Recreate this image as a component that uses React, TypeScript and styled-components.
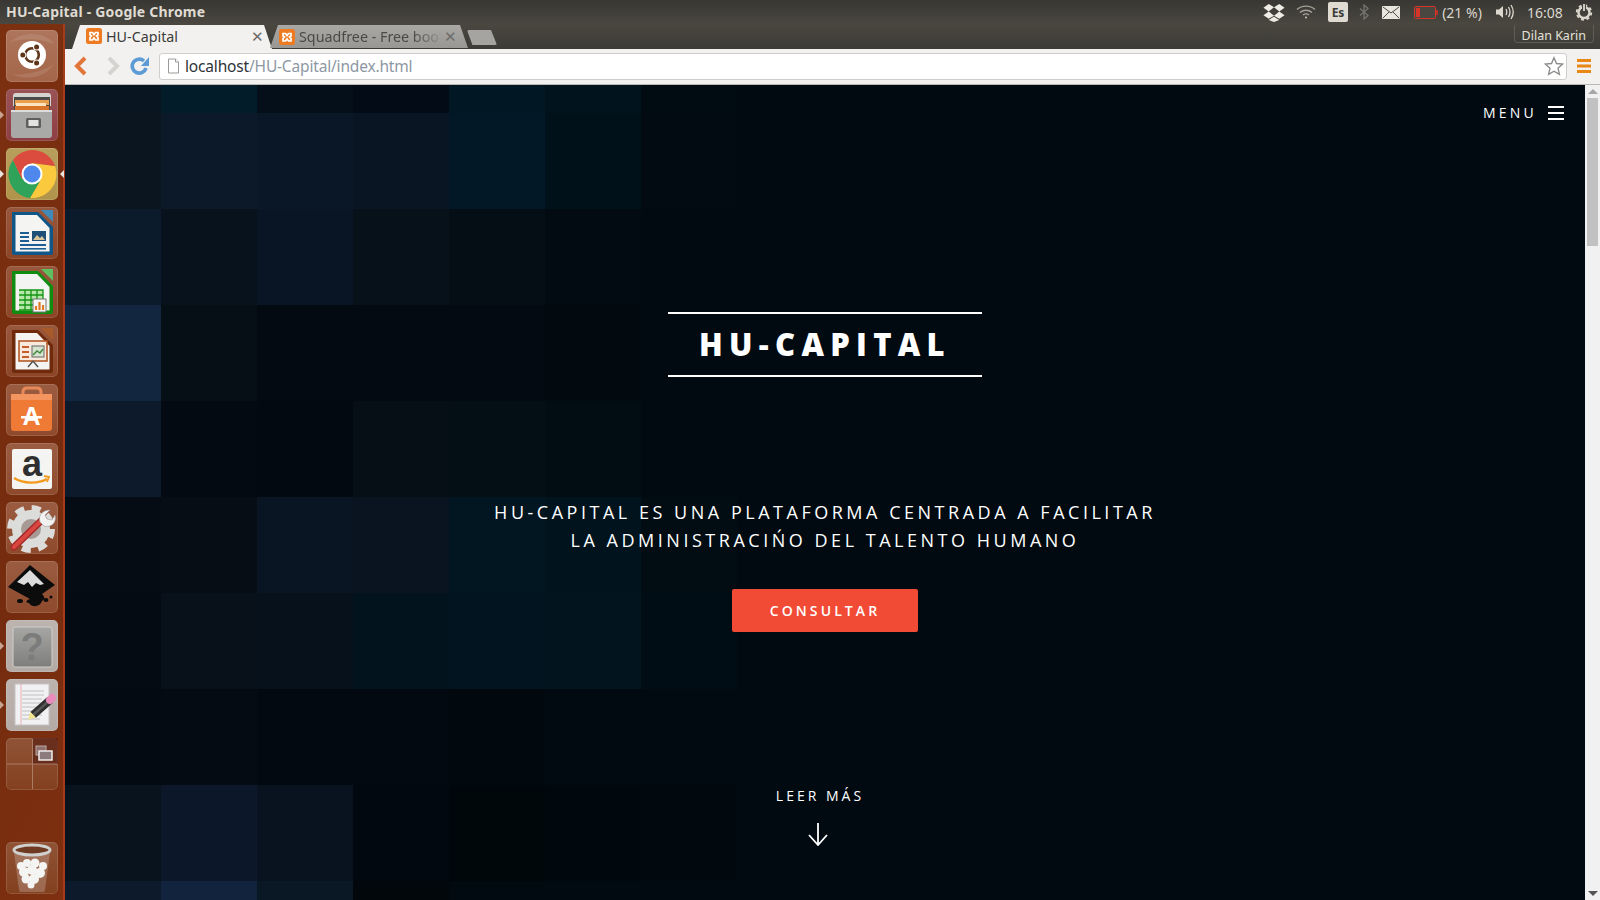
import React from 'react';
import styled, { createGlobalStyle } from 'styled-components';

const Global = createGlobalStyle`
  html, body {
    margin: 0;
    height: 100%;
    overflow: hidden;
    background: #3c3b37;
  }
  * { box-sizing: border-box; }
`;

const uiFont = `"Noto Sans", "Open Sans", sans-serif`;
const siteFont = `"Open Sans", "Noto Sans", sans-serif`;

const Desktop = styled.div`
  width: 1600px;
  height: 900px;
  display: flex;
  flex-direction: column;
  overflow: hidden;
`;

const TopPanel = styled.header`
  height: 24px;
  flex: none;
  display: flex;
  align-items: center;
  padding-left: 6px;
  background: linear-gradient(#383733, #4a4740);
  font-family: ${uiFont};
  color: #dfdbd2;
`;

const WindowTitle = styled.div`
  font-size: 14px;
  font-weight: 700;
  flex: 1;
  letter-spacing: 0.2px;
  padding-bottom: 2px;
`;

const Indicators = styled.div`
  display: flex;
  align-items: center;
  height: 24px;
  padding-right: 7px;
`;

const Indicator = styled.div<{ $w: number; $ml?: number }>`
  width: ${(p) => p.$w}px;
  margin-left: ${(p) => p.$ml ?? 0}px;
  height: 24px;
  display: flex;
  align-items: center;
  justify-content: center;
  font-size: 14px;
  white-space: nowrap;
  color: #dcd8ce;
`;

const LangBox = styled.div`
  width: 20px;
  height: 20px;
  border-radius: 2px;
  background: #dfdbd2;
  color: #3c3b37;
  font-size: 12px;
  font-weight: 700;
  display: flex;
  align-items: center;
  justify-content: center;
`;

const Body = styled.div`
  flex: 1;
  display: flex;
  min-height: 0;
`;

const Launcher = styled.nav`
  width: 65px;
  flex: none;
  display: flex;
  flex-direction: column;
  gap: 7px;
  padding: 6px 0 6px 6px;
  background: linear-gradient(115deg, #7c3010, #752c0e 60%, #7e3010);
  border-right: 2px solid #a83a1c;
`;

const Tile = styled.div<{ $tint: string }>`
  position: relative;
  width: 52px;
  height: 52px;
  flex: none;
  border-radius: 5px;
  background: linear-gradient(rgba(255, 255, 255, 0.1), rgba(255, 255, 255, 0)), ${(p) => p.$tint};
  box-shadow: inset 0 0 0 1px rgba(255, 255, 255, 0.12);

  svg {
    display: block;
  }
`;

const TrashTile = styled(Tile)`
  margin-top: auto;
`;

const Pip = styled.span<{ $side: 'left' | 'right'; $hollow?: boolean }>`
  position: absolute;
  top: 22px;
  width: 0;
  height: 0;
  border-top: 4px solid transparent;
  border-bottom: 4px solid transparent;
  ${(p) =>
    p.$side === 'left'
      ? `left: -6px; border-left: 4px solid ${p.$hollow ? '#c9a391' : '#e8e4e0'};`
      : `right: -6px; border-right: 4px solid #e8e4e0;`}
`;

const Browser = styled.main`
  flex: 1;
  min-width: 0;
  display: flex;
  flex-direction: column;
`;

const TabStrip = styled.div`
  height: 25px;
  flex: none;
  display: flex;
  align-items: flex-end;
  padding-left: 7px;
  background: linear-gradient(#4a4740, #3c3b36);
  font-family: ${uiFont};
`;

const Tab = styled.div<{ $active?: boolean }>`
  width: ${(p) => (p.$active ? 200 : 198)}px;
  margin-right: ${(p) => (p.$active ? -2 : 0)}px;
  height: ${(p) => (p.$active ? 24 : 23)}px;
  margin-bottom: ${(p) => (p.$active ? 0 : 1)}px;
  display: flex;
  align-items: center;
  padding: ${(p) => (p.$active ? '0 8px 2px 14px' : '0 11px 0 9px')};
  clip-path: polygon(0 100%, 8px 0, calc(100% - 8px) 0, 100% 100%);
  background: ${(p) => (p.$active ? '#f2f1f0' : 'linear-gradient(#a9a8a5, #989794)')};
  color: ${(p) => (p.$active ? '#3c3b37' : '#4c4a46')};
  font-size: 14.3px;
`;

const Favicon = styled.svg`
  flex: none;
  margin-right: 4px;
`;

const TabLabel = styled.span<{ $fade?: boolean }>`
  flex: 1;
  white-space: nowrap;
  overflow: hidden;
  ${(p) => p.$fade && 'mask-image: linear-gradient(90deg, #000 78%, transparent 100%);'}
`;

const TabClose = styled.span`
  flex: none;
  font-size: 15px;
  line-height: 1;
  color: #6d6c69;
`;

const NewTab = styled.div`
  width: 30px;
  height: 15px;
  margin: 0 0 4px -1px;
  border-radius: 2px;
  clip-path: polygon(0 0, 80% 0, 100% 100%, 18% 100%);
  background: #a5a4a1;
`;

const UserChip = styled.div`
  margin: 0 6px 6px auto;
  height: 18px;
  padding: 3px 7px 0;
  display: flex;
  align-items: center;
  border: 1px solid #5e5c55;
  border-top: none;
  border-radius: 0 0 4px 4px;
  color: #e4e1d9;
  font-size: 12.5px;
`;

const Toolbar = styled.div`
  height: 36px;
  flex: none;
  display: flex;
  align-items: center;
  padding: 0 9px 1px 6px;
  background: #f2f1f0;
  border-bottom: 1px solid #b9b8b5;
  font-family: ${uiFont};
`;

const NavIcon = styled.svg`
  flex: none;
  margin-right: 7px;
`;

const ForwardIcon = styled(NavIcon)`
  margin-left: 5px;
`;

const Omnibox = styled.div`
  flex: 1;
  height: 27px;
  display: flex;
  align-items: center;
  margin-left: 2px;
  padding: 0 2px 0 7px;
  background: #fff;
  border: 1px solid #cfcecb;
  border-radius: 3px;
  font-size: 15.5px;
`;

const Url = styled.div`
  flex: 1;
  margin-left: 5px;
  color: #8d97a3;
  letter-spacing: -0.17px;

  b {
    font-weight: 400;
    color: #2f3338;
  }
`;

const ChromeMenu = styled.svg`
  margin-left: 10px;
`;

const Viewport = styled.div`
  flex: 1;
  min-height: 0;
  display: flex;
`;

const Page = styled.section`
  position: relative;
  flex: 1;
  min-width: 0;
  overflow: hidden;
  display: flex;
  flex-direction: column;
  align-items: center;
  background: #010a11;
  font-family: ${siteFont};
  color: #fff;
`;

const Mosaic = styled.div`
  position: absolute;
  inset: 0;
  display: grid;
  grid-template-columns: repeat(16, 96px);
  grid-template-rows: 28px repeat(8, 96px) 19px;
`;

const MosaicCell = styled.div<{ $color: string }>`
  background: ${(p) => p.$color};
`;

const PageNav = styled.div`
  position: relative;
  align-self: stretch;
  height: 38px;
  padding: 18px 21px 0 0;
  display: flex;
  justify-content: flex-end;
  align-items: center;
  gap: 11px;
`;

const MenuLabel = styled.span`
  font-size: 14px;
  line-height: 20px;
  letter-spacing: 3.2px;
`;

const Burger = styled.div`
  width: 16px;
  height: 14px;
  display: flex;
  flex-direction: column;
  justify-content: space-between;

  span {
    height: 2px;
    background: #fff;
  }
`;

const TitleBox = styled.h1`
  position: relative;
  width: 314px;
  height: 65px;
  margin: 189px 0 0;
  padding-bottom: 2px;
  display: flex;
  align-items: center;
  justify-content: center;
  border-top: 2px solid #fff;
  border-bottom: 2px solid #fff;
  font-size: 31px;
  font-weight: 800;
  letter-spacing: 6.3px;
`;

const Tagline = styled.p`
  position: relative;
  margin: 121px 0 0;
  text-align: center;
  font-size: 18px;
  line-height: 28px;
  letter-spacing: 3.52px;
`;

const CtaButton = styled.a`
  position: relative;
  width: 186px;
  height: 43px;
  margin-top: 35px;
  display: flex;
  align-items: center;
  justify-content: center;
  border-radius: 2px;
  background: #f24b35;
  font-size: 14px;
  font-weight: 600;
  letter-spacing: 3.1px;
`;

const ReadMore = styled.div`
  position: relative;
  margin: 154px 10px 0 0;
  display: flex;
  flex-direction: column;
  align-items: center;
  gap: 17px;
  font-size: 14px;
  line-height: 20px;
  letter-spacing: 3px;
`;

const DownArrow = styled.svg`
  margin-right: 4px;
`;

const Scrollbar = styled.aside`
  width: 15px;
  flex: none;
  display: flex;
  flex-direction: column;
  align-items: center;
  padding: 4px 0 4px;
  background: #f1f1f1;
`;

const ScrollThumb = styled.div`
  width: 11px;
  height: 148px;
  margin: 4px 0 auto;
  background: #c1c1c1;
`;

const ScrollArrow = styled.div<{ $down?: boolean }>`
  width: 0;
  height: 0;
  border-left: 5px solid transparent;
  border-right: 5px solid transparent;
  ${(p) => (p.$down ? 'border-top: 5px solid #555;' : 'border-bottom: 5px solid #a6a6a6;')}
`;

const mosaicRows: string[][] = [
  ['#091520', '#021c29', '#050f1a', '#030b16', '#011723', '#01131d', '#010b12'],
  ['#0a1520', '#0c1929', '#0a1726', '#091523', '#021826', '#01111a', '#010b11'],
  ['#0c1b2c', '#08121d', '#091524', '#07111a', '#050e15', '#020b12'],
  ['#132640', '#060e16', '#030a11', '#030a11', '#030a11', '#020a10'],
  ['#0d1a2b', '#040a12', '#030911', '#060e16', '#040e15', '#020c13'],
  ['#060c14', '#060d15', '#0a1523', '#091420', '#021622', '#01141e', '#010c13'],
  ['#050b12', '#08101a', '#07111b', '#02131d', '#02141f', '#02141d', '#010d14'],
  ['#040a11', '#050b13', '#030911', '#020911', '#01090f'],
  ['#09131d', '#0c1829', '#08131f', '#020810', '#00070b', '#01080d', '#01090f'],
  ['#0d1a2c', '#12233d', '#0a1725', '#01070b'],
];

function XamppIcon() {
  return (
    <Favicon width="16" height="16" viewBox="0 0 16 16">
      <rect width="16" height="16" rx="2.5" fill="#ee7a22" />
      <path d="M4 4.500h2.500L8 6.500l1.500-2H12v2.500L10.500 8l1.500 1.500V12H9.500L8 10l-1.500 2H4V9.500L5.500 8 4 7z" fill="none" stroke="#fff" strokeWidth="1.700" />
    </Favicon>
  );
}

function UbuntuIcon() {
  return (
    <svg width="52" height="52" viewBox="0 0 52 52">
      <path d="M4 12C18 0 40 2 48 14c-14-6-30-6-44-2z" fill="#fff" opacity=".1" />
      <path d="M6 44c10 6 32 6 42-10-8 6-28 12-42 10z" fill="#fff" opacity=".1" />
      <circle cx="26" cy="25" r="14" fill="#fff" />
      <circle cx="26" cy="25" r="6.800" fill="none" stroke="#5f3519" strokeWidth="2.600" />
      <circle cx="16.800" cy="25" r="3.600" fill="#fff" />
      <circle cx="30.600" cy="17" r="3.600" fill="#fff" />
      <circle cx="30.600" cy="33" r="3.600" fill="#fff" />
      <circle cx="16.800" cy="25" r="2.500" fill="#5f3519" />
      <circle cx="30.600" cy="17" r="2.500" fill="#5f3519" />
      <circle cx="30.600" cy="33" r="2.500" fill="#5f3519" />
    </svg>
  );
}

function FilesIcon() {
  return (
    <svg width="52" height="52" viewBox="0 0 52 52">
      <path d="M7 7q0-3 3-3h32q3 0 3 3v10H7z" fill="#d5d3d0" />
      <rect x="8" y="8" width="36" height="14" fill="#4a4a4a" />
      <rect x="9" y="11" width="34" height="5" fill="#e8a04f" />
      <rect x="10" y="14" width="30" height="3" fill="#fbe3bd" />
      <rect x="9" y="17" width="34" height="4" fill="#d9742b" />
      <path d="M5 21h41v25q0 3-3 3H8q-3 0-3-3z" fill="#a9a9a7" />
      <rect x="5" y="21" width="41" height="2" fill="#dcdcda" />
      <rect x="20" y="29" width="15" height="10" rx="1.500" fill="#5e5e5c" />
      <rect x="22.500" y="31" width="10" height="6" fill="#e3e3e1" />
    </svg>
  );
}

function ChromeIcon() {
  return (
    <svg width="52" height="52" viewBox="0 0 52 52">
      <path d="M26 15L49 18A24 24 0 0 1 24 49.900L34 33z" fill="#fbc93d" />
      <path d="M7 12A24 24 0 0 0 24 49.900L34 33 16 31z" fill="#2fa35a" />
      <path d="M26 15L49 18A24 24 0 0 0 7 12L16 31z" fill="#db4c3f" />
      <circle cx="26" cy="26" r="10.500" fill="#fff" />
      <circle cx="26" cy="26" r="8.500" fill="#4f88ed" />
    </svg>
  );
}

function DocShape({ border, fold }: { border: string; fold: string }) {
  return (
    <>
      <path d="M6 5h26l15 15v26q0 2-2 2H8q-2 0-2-2z" fill={border} />
      <path d="M35 3h12v12z" fill={fold} />
      <path d="M9.500 8H31l12.500 13v23.500h-34z" fill="#f4f4f2" />
    </>
  );
}

function WriterIcon() {
  return (
    <svg width="52" height="52" viewBox="0 0 52 52">
      <DocShape border="#0f5689" fold="#3f8ab8" />
      <rect x="26" y="24" width="14" height="10" fill="#1d4f78" />
      <path d="M27 33l4-5 3 3 2-2 3 4z" fill="#d9c59a" />
      <g fill="#1d5f94">
        <rect x="14" y="25" width="9" height="2" />
        <rect x="14" y="29" width="9" height="2" />
        <rect x="14" y="33" width="9" height="2" />
        <rect x="14" y="37" width="26" height="2" />
        <rect x="14" y="41" width="26" height="1.600" />
      </g>
    </svg>
  );
}

function CalcIcon() {
  return (
    <svg width="52" height="52" viewBox="0 0 52 52">
      <DocShape border="#108d10" fold="#5fc05f" />
      <path d="M13 24h24v20H13z" fill="#b5e8a8" />
      <path d="M13 24h24v20H13M13 29h24M13 34h24M13 39h24M19 24v20M25 24v20M31 24v20" fill="none" stroke="#139213" strokeWidth="1.300" />
      <rect x="27" y="33" width="13" height="13" fill="#f6f6f6" stroke="#777" />
      <path d="M30 44v-4M33.500 44v-8M37 44v-5" stroke="#e07b24" strokeWidth="2.200" />
    </svg>
  );
}

function ImpressIcon() {
  return (
    <svg width="52" height="52" viewBox="0 0 52 52">
      <DocShape border="#6e2a0a" fold="#a95a2b" />
      <rect x="13" y="16" width="28" height="20" fill="#f9e9dd" stroke="#b35a27" strokeWidth="1.600" />
      <path d="M16 21h7v2h-7zM16 26h7v2h-7zM16 31h7v2h-7z" fill="#c5602a" />
      <rect x="26" y="21" width="12" height="11" fill="#d7e3ce" stroke="#666" />
      <path d="M27 30l4-4 3 2 3-4" fill="none" stroke="#3e8a3e" strokeWidth="1.500" />
      <path d="M27 36l5 6M27 36l-5 6" stroke="#555" strokeWidth="1.500" />
    </svg>
  );
}

function SoftwareIcon() {
  return (
    <svg width="52" height="52" viewBox="0 0 52 52">
      <path d="M17 12V8q0-4 4-4h10q4 0 4 4v4" fill="none" stroke="#e8895a" strokeWidth="3" />
      <path d="M5 10h41v34q0 3-3 3H8q-3 0-3-3z" fill="#ef7a35" />
      <path d="M5 10h41v6H5z" fill="#f49560" />
      <text x="25.500" y="41" textAnchor="middle" fontFamily="Liberation Sans, sans-serif" fontWeight="700" fontSize="25" fill="#fff">A</text>
      <rect x="15" y="32" width="21" height="2.500" fill="#fff" />
    </svg>
  );
}

function AmazonIcon() {
  return (
    <svg width="52" height="52" viewBox="0 0 52 52">
      <rect x="6" y="6" width="40" height="40" rx="2" fill="#f4f4f2" />
      <text x="26" y="33" textAnchor="middle" fontFamily="Liberation Sans, sans-serif" fontWeight="700" fontSize="36" fill="#2f2f2f">a</text>
      <path d="M8 35c10 6 24 6 33 1" fill="none" stroke="#f39a1e" strokeWidth="2.400" />
      <path d="M38 33l5 1-2 5" fill="none" stroke="#f39a1e" strokeWidth="1.800" />
    </svg>
  );
}

function SettingsIcon() {
  return (
    <svg width="52" height="52" viewBox="0 0 52 52">
      <circle cx="25" cy="27" r="21" fill="none" stroke="#dcdcda" strokeWidth="6" strokeDasharray="9 7.500" />
      <circle cx="25" cy="27" r="19" fill="#dcdcda" />
      <circle cx="25" cy="27" r="10" fill="#a79a94" />
      <path d="M8 45L37 17" stroke="#a52a2a" strokeWidth="7" strokeLinecap="round" />
      <path d="M8 45L37 17" stroke="#d9463f" strokeWidth="4" strokeLinecap="round" />
      <path d="M34 20c-2-6 2-12 10-12l-5 5 2 4 5 1 3-5c2 8-4 13-11 11z" fill="#f2f2f0" stroke="#999" strokeWidth=".6" />
    </svg>
  );
}

function InkscapeIcon() {
  return (
    <svg width="52" height="52" viewBox="0 0 52 52">
      <path d="M24 4L49 24 36 33c2 2 4 5 0 7-2 6-10 7-13 2-4 0-3-3 1-4L2 26z" fill="#0c0c0c" />
      <path d="M24 9L11 21l7 3 4-3 4 5 4-4 4 2 4-1z" fill="#dcdcdc" />
      <ellipse cx="14" cy="40" rx="3" ry="2" fill="#0c0c0c" />
      <ellipse cx="40" cy="39" rx="2.500" ry="2" fill="#0c0c0c" />
      <circle cx="45" cy="36" r="1.500" fill="#0c0c0c" />
    </svg>
  );
}

function HelpIcon() {
  return (
    <svg width="52" height="52" viewBox="0 0 52 52">
      <defs>
        <linearGradient id="helpFill" x1="0" y1="0" x2="0" y2="1">
          <stop offset="0" stopColor="#a6a6a5" />
          <stop offset="1" stopColor="#7e7e7d" />
        </linearGradient>
      </defs>
      <rect x="7" y="7" width="39" height="40" rx="2" fill="url(#helpFill)" stroke="#d0cecb" />
      <text x="26" y="40" textAnchor="middle" fontFamily="Liberation Sans, sans-serif" fontSize="38" fontWeight="700" fill="#7c7c7b">?</text>
    </svg>
  );
}

function GeditIcon() {
  return (
    <svg width="52" height="52" viewBox="0 0 52 52">
      <rect x="9" y="5" width="34" height="41" fill="#f1f1f3" stroke="#c4c4c6" />
      <path d="M15 5v41" stroke="#eab1b1" />
      <path d="M16 12h22M16 16h22M16 20h20M16 24h22M16 28h14M16 32h12M16 36h20M16 40h18" stroke="#9a9a9a" strokeWidth=".8" opacity=".7" />
      <path d="M27 36L44 21" stroke="#2f2f2f" strokeWidth="8" />
      <path d="M27 36L44 21" stroke="#555" strokeWidth="2.500" />
      <path d="M44 21l2-2" stroke="#ea8cbb" strokeWidth="8" strokeLinecap="round" />
      <path d="M24.500 33l5.500 5.500-4.500 1-3.500 1.500z" fill="#f3e58c" />
    </svg>
  );
}

function WorkspacesIcon() {
  return (
    <svg width="52" height="52" viewBox="0 0 52 52">
      <rect x="26.500" y="0" width="25.500" height="26" fill="#5a1f14" opacity=".7" />
      <path d="M26.500 1v50M1 26h50" stroke="#b58a74" strokeWidth="1" opacity=".8" />
      <rect x="30" y="8" width="10" height="9" fill="#8f6f6b" stroke="#bcaaa6" />
      <rect x="33" y="13" width="13" height="9" fill="#8d7c7e" stroke="#f0ecea" strokeWidth="1.500" />
    </svg>
  );
}

function TrashIcon() {
  return (
    <svg width="52" height="52" viewBox="0 0 52 52">
      <path d="M8 10l5 38q0 2 3 2h20q3 0 3-2l5-38z" fill="#d7c6bf" opacity=".3" />
      <ellipse cx="26" cy="8" rx="18" ry="5" fill="#6e3a22" stroke="#d0d0ce" strokeWidth="3" />
      <g fill="#f4f4f2">
        <circle cx="15" cy="24" r="4" />
        <circle cx="21" cy="21" r="4" />
        <circle cx="29" cy="21" r="4.500" />
        <circle cx="37" cy="24" r="4" />
        <circle cx="18" cy="30" r="5" />
        <circle cx="26" cy="28" r="5" />
        <circle cx="34" cy="31" r="5" />
        <circle cx="20" cy="37" r="4.500" />
        <circle cx="28" cy="37" r="5" />
        <circle cx="25" cy="43" r="3.500" />
      </g>
    </svg>
  );
}

export default function App() {
  return (
    <Desktop>
      <Global />
      <TopPanel>
        <WindowTitle>HU-Capital - Google Chrome</WindowTitle>
        <Indicators>
          <Indicator $w={24}>
            <svg width="22" height="19" viewBox="0 0 20 18" fill="#efece6">
              <path d="M5 1l5 3-5 4-5-3.500zM15 1l5 3.500-5 3.500-5-4zM0 11.500L5 8l5 4-5 3zM20 11.500L15 8l-5 4 5 3zM10 13l5 3-5 2-5-2z" />
            </svg>
          </Indicator>
          <Indicator $w={22} $ml={9}>
            <svg width="20" height="14" viewBox="0 0 20 14" fill="none" stroke="#a5a29a" strokeWidth="1.400">
              <path d="M1 4.500c5-4.500 13-4.500 18 0M4 7.500c3.500-3 8.500-3 12 0M7 10c2-1.500 4-1.500 6 0" />
              <circle cx="10" cy="12.500" r=".9" fill="#dcd8ce" stroke="none" />
            </svg>
          </Indicator>
          <Indicator $w={20} $ml={11}>
            <LangBox>Es</LangBox>
          </Indicator>
          <Indicator $w={14} $ml={9}>
            <svg width="10" height="16" viewBox="0 0 10 16" fill="none" stroke="#767470" strokeWidth="1.300">
              <path d="M1 4.500l8 7-4 3.500V1l4 3.500-8 7" />
            </svg>
          </Indicator>
          <Indicator $w={18} $ml={11}>
            <svg width="18" height="13" viewBox="0 0 18 13">
              <rect width="18" height="13" rx="1" fill="#e8e5df" />
              <path d="M1 1l8 6 8-6M1 12l6-6M17 12l-6-6" fill="none" stroke="#4a4740" strokeWidth="1" />
            </svg>
          </Indicator>
          <Indicator $w={24} $ml={14}>
            <svg width="24" height="13" viewBox="0 0 24 13">
              <rect x=".5" y=".5" width="21" height="12" rx="1" fill="#4a4740" stroke="#d8352a" />
              <rect x="2" y="2" width="4" height="9" fill="#d8352a" />
              <rect x="22" y="4" width="2" height="5" fill="#b8332a" />
            </svg>
          </Indicator>
          <Indicator $w={44} $ml={2}>(21 %)</Indicator>
          <Indicator $w={20} $ml={11}>
            <svg width="20" height="16" viewBox="0 0 20 16" fill="none" stroke="#dcd8ce" strokeWidth="1.300">
              <path d="M1 5.500h3L8 2v12l-4-3.500H1z" fill="#dcd8ce" stroke="none" />
              <path d="M11 5q1.500 3 0 6M13.500 3q3 5 0 10M16 1q4.500 7 0 14" />
            </svg>
          </Indicator>
          <Indicator $w={38} $ml={11}>16:08</Indicator>
          <Indicator $w={18} $ml={11}>
            <svg width="18" height="18" viewBox="0 0 18 18" fill="none" stroke="#dcd8ce">
              <circle cx="9" cy="9.500" r="5.500" strokeWidth="2.400" />
              <circle cx="9" cy="9.500" r="7.300" strokeWidth="1.800" strokeDasharray="3 2.730" />
              <path d="M9 1v7" stroke="#46433c" strokeWidth="4" />
              <path d="M9 1v7" strokeWidth="1.800" />
            </svg>
          </Indicator>
        </Indicators>
      </TopPanel>

      <Body>
        <Launcher>
          <Tile $tint="#a4664a"><UbuntuIcon /></Tile>
          <Tile $tint="#8e3f43"><FilesIcon /><Pip $side="left" $hollow /></Tile>
          <Tile $tint="#b0944a"><ChromeIcon /><Pip $side="left" /><Pip $side="right" /></Tile>
          <Tile $tint="#8c4527"><WriterIcon /></Tile>
          <Tile $tint="#8c4527"><CalcIcon /></Tile>
          <Tile $tint="#8c4527"><ImpressIcon /></Tile>
          <Tile $tint="#8f4a2c"><SoftwareIcon /></Tile>
          <Tile $tint="#8f4a2c"><AmazonIcon /></Tile>
          <Tile $tint="#8f4a2c"><SettingsIcon /></Tile>
          <Tile $tint="#8f4a2c"><InkscapeIcon /></Tile>
          <Tile $tint="#b5aba6"><HelpIcon /><Pip $side="left" $hollow /></Tile>
          <Tile $tint="#b5aba6"><GeditIcon /><Pip $side="left" $hollow /></Tile>
          <Tile $tint="#83401f"><WorkspacesIcon /></Tile>
          <TrashTile $tint="#83401f"><TrashIcon /></TrashTile>
        </Launcher>

        <Browser>
          <TabStrip>
            <Tab $active>
              <XamppIcon />
              <TabLabel>HU-Capital</TabLabel>
              <TabClose>✕</TabClose>
            </Tab>
            <Tab>
              <XamppIcon />
              <TabLabel $fade>Squadfree - Free boo</TabLabel>
              <TabClose>✕</TabClose>
            </Tab>
            <NewTab />
            <UserChip>Dilan Karin</UserChip>
          </TabStrip>

          <Toolbar>
            <NavIcon width="20" height="22" viewBox="0 0 20 22" fill="none">
              <path d="M14 3L6 11l8 8" stroke="#e2763a" strokeWidth="4" />
            </NavIcon>
            <ForwardIcon width="20" height="22" viewBox="0 0 20 22" fill="none">
              <path d="M6 3l8 8-8 8" stroke="#d4d3d0" strokeWidth="4" />
            </ForwardIcon>
            <NavIcon width="20" height="20" viewBox="0 0 20 20" fill="none">
              <path d="M16 12a7 7 0 1 1-2-7" stroke="#5c9bd6" strokeWidth="3.600" />
              <path d="M19 1v9h-8z" fill="#5c9bd6" />
            </NavIcon>
            <Omnibox>
              <svg width="13" height="16" viewBox="0 0 13 16" fill="#fff" stroke="#9a9a98">
                <path d="M1.500 1h7l3 3v11h-10z" />
                <path d="M8.500 1v3h3" />
              </svg>
              <Url><b>localhost</b>/HU-Capital/index.html</Url>
              <svg width="20" height="20" viewBox="0 0 24 24" fill="none" stroke="#8b8b89" strokeWidth="1.600">
                <path d="M12 2l3 7 7.500.7-5.700 5 1.700 7.300L12 18.200 5.500 22l1.700-7.300-5.700-5L9 9z" />
              </svg>
            </Omnibox>
            <ChromeMenu width="14" height="14" viewBox="0 0 14 14" fill="#e98716">
              <rect y="0" width="14" height="3" />
              <rect y="5.500" width="14" height="3" />
              <rect y="11" width="14" height="3" />
            </ChromeMenu>
          </Toolbar>

          <Viewport>
            <Page>
              <Mosaic>
                {mosaicRows.map((row, r) =>
                  Array.from({ length: 16 }, (_, c) => (
                    <MosaicCell key={`${r}-${c}`} $color={row[c] ?? 'transparent'} />
                  ))
                )}
              </Mosaic>
              <PageNav>
                <MenuLabel>MENU</MenuLabel>
                <Burger>
                  <span />
                  <span />
                  <span />
                </Burger>
              </PageNav>
              <TitleBox>HU-CAPITAL</TitleBox>
              <Tagline>
                HU-CAPITAL ES UNA PLATAFORMA CENTRADA A FACILITAR
                <br />
                LA ADMINISTRACIŃO DEL TALENTO HUMANO
              </Tagline>
              <CtaButton>CONSULTAR</CtaButton>
              <ReadMore>
                LEER MÁS
                <DownArrow width="22" height="23" viewBox="0 0 22 23" fill="none" stroke="#fff" strokeWidth="1.800">
                  <path d="M11 0v21M2 12l9 10 9-10" />
                </DownArrow>
              </ReadMore>
            </Page>
            <Scrollbar>
              <ScrollArrow />
              <ScrollThumb />
              <ScrollArrow $down />
            </Scrollbar>
          </Viewport>
        </Browser>
      </Body>
    </Desktop>
  );
}
